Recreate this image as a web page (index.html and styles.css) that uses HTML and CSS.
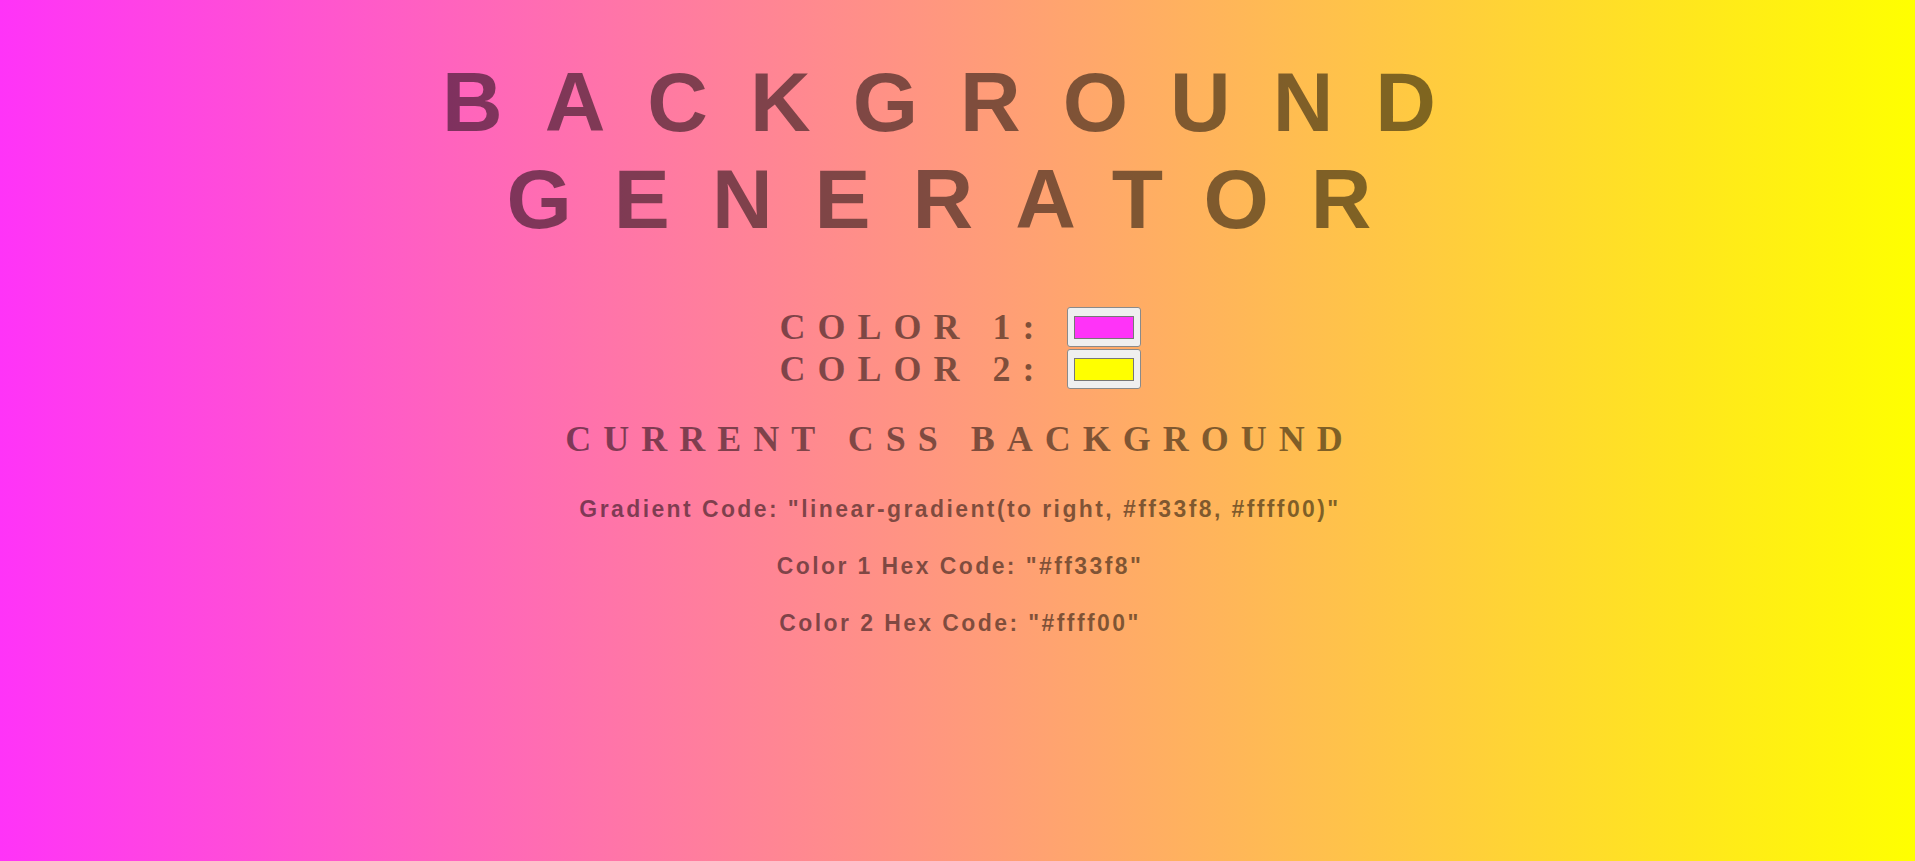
FILE: index.html
```html
<!DOCTYPE html>
<html lang="en">
<head>
<meta charset="utf-8">
<title>Background Generator</title>
<link rel="stylesheet" href="styles.css">
</head>
<body>
<main class="app">
  <h1 class="title">Background Generator</h1>
  <div class="pickers">
    <label class="picker"><span class="picker-label">Color 1:</span><input class="swatch" type="color" value="#ff33f8"></label>
    <label class="picker"><span class="picker-label">Color 2:</span><input class="swatch" type="color" value="#ffff00"></label>
  </div>
  <h2 class="subtitle">Current CSS Background</h2>
  <div class="codes">
    <p class="code">Gradient Code: "linear-gradient(to right, #ff33f8, #ffff00)"</p>
    <p class="code">Color 1 Hex Code: "#ff33f8"</p>
    <p class="code">Color 2 Hex Code: "#ffff00"</p>
  </div>
</main>
</body>
</html>
```

FILE: styles.css
```css
html {
  height: 100%;
  background: linear-gradient(to right, #ff33f8, #ffff00);
}

body {
  margin: 0;
  min-height: 100%;
  background: linear-gradient(to right, #ff33f8, #ffff00);
  color: rgba(0, 0, 0, 0.5);
}

.app {
  padding: 54px 0 0 5px;
  text-align: center;
}

.title {
  margin: 0;
  font-family: "Liberation Sans", Arial, sans-serif;
  font-weight: bold;
  font-size: 84px;
  line-height: 97px;
  letter-spacing: 42px;
  text-transform: uppercase;
}

.pickers {
  margin-top: 58px;
  display: flex;
  flex-direction: column;
  align-items: center;
}

.picker {
  display: flex;
  align-items: center;
  height: 42px;
  gap: 20px;
}

.picker-label {
  font-family: "Liberation Serif", "Times New Roman", serif;
  font-weight: bold;
  font-size: 36px;
  line-height: 42px;
  letter-spacing: 12px;
  text-transform: uppercase;
}

.swatch {
  -webkit-appearance: none;
  appearance: none;
  box-sizing: border-box;
  width: 74px;
  height: 40px;
  margin: 0;
  padding: 7.5px 6px;
  border: 1px solid #8a8a8a;
  border-radius: 3px;
  background: #efefef;
  cursor: pointer;
}

.swatch::-webkit-color-swatch-wrapper {
  padding: 0;
}

.swatch::-webkit-color-swatch {
  border: 1px solid #777777;
  border-radius: 0;
}

.subtitle {
  margin: 29px 0 0;
  font-family: "Liberation Serif", "Times New Roman", serif;
  font-weight: bold;
  font-size: 36px;
  line-height: 41px;
  letter-spacing: 12px;
  text-transform: uppercase;
}

.codes {
  margin-top: 36px;
  display: flex;
  flex-direction: column;
  gap: 31px;
}

.code {
  margin: 0;
  font-family: "Liberation Sans", Arial, sans-serif;
  font-weight: bold;
  font-size: 23px;
  line-height: 26px;
  letter-spacing: 2.4px;
}
```
